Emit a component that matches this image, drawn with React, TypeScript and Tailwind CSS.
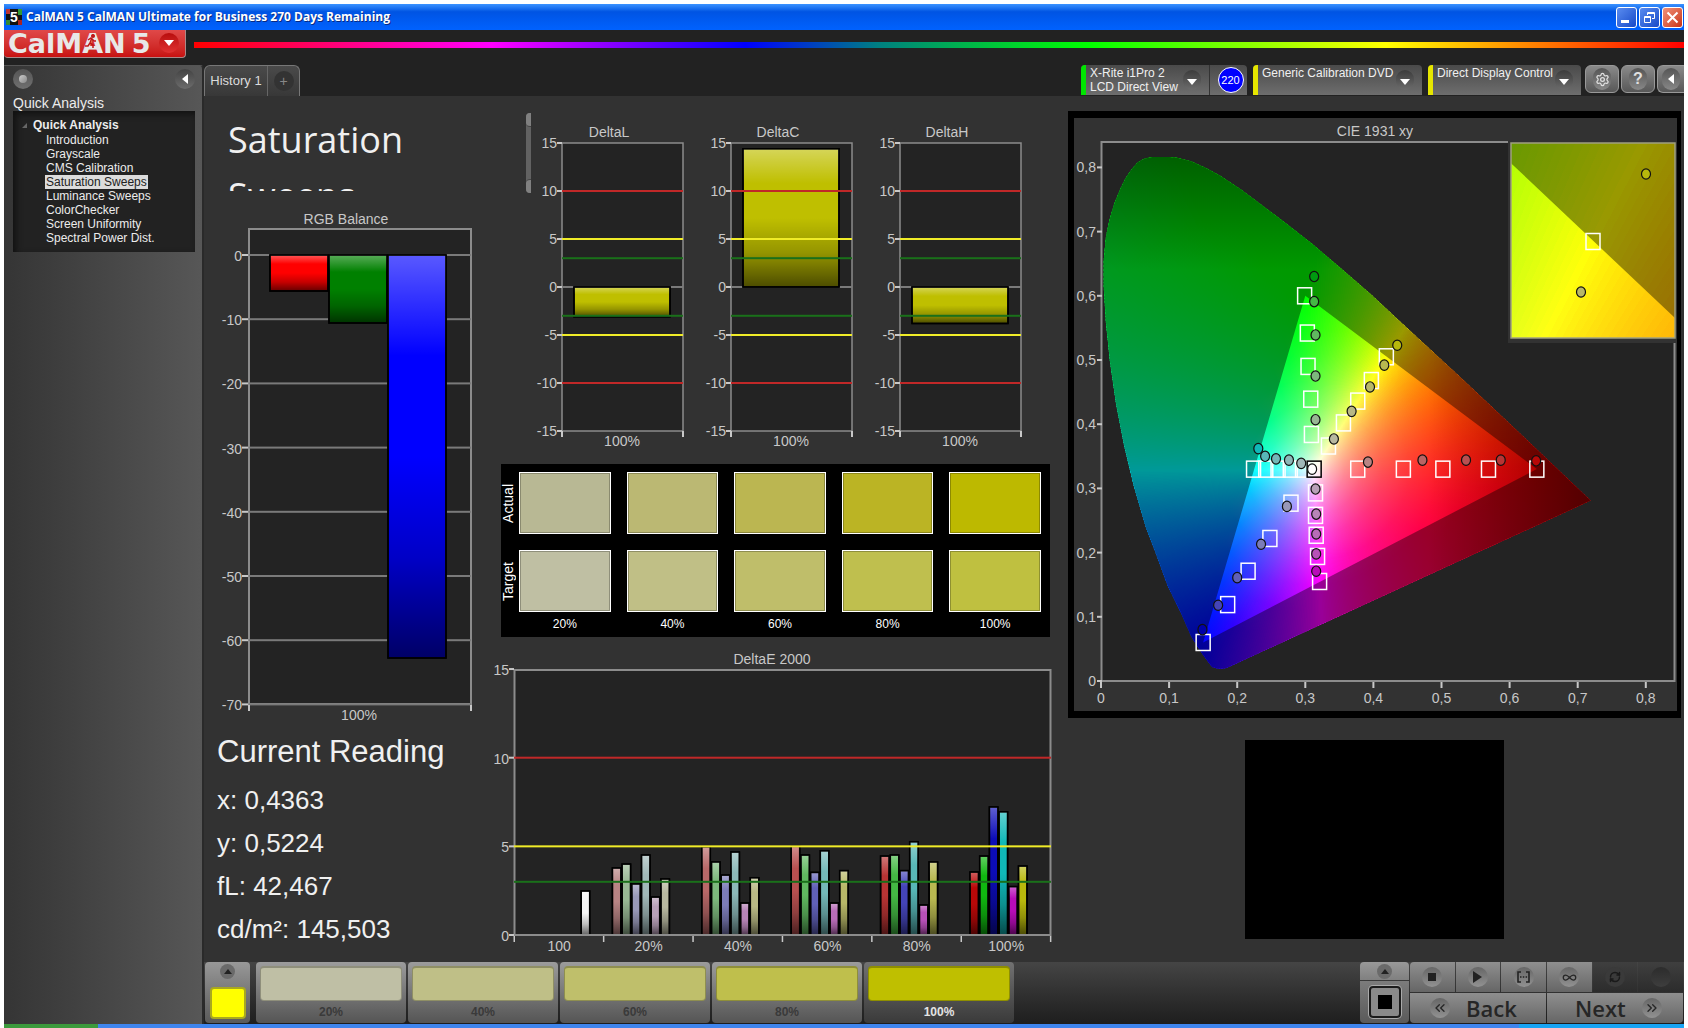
import React, { useState } from 'react';
import { ChevronsLeft, ChevronsRight, Infinity as InfinityIcon, RefreshCw, Settings } from 'lucide-react';

const PAGES = [
  'Introduction',
  'Grayscale',
  'CMS Calibration',
  'Saturation Sweeps',
  'Luminance Sweeps',
  'ColorChecker',
  'Screen Uniformity',
  'Spectral Power Dist.',
];

const SWEEP = [
  { label: '20%', actual: '#b8b894', target: '#bfbfa3' },
  { label: '40%', actual: '#bbb873', target: '#c0bf86' },
  { label: '60%', actual: '#bbb651', target: '#bfbe6a' },
  { label: '80%', actual: '#bbb424', target: '#bfbf4e' },
  { label: '100%', actual: '#bdb900', target: '#bfc040' },
];

const PATCHES = [
  { label: '20%', color: '#bfbfa5' },
  { label: '40%', color: '#bfbf87' },
  { label: '60%', color: '#bfbf6b' },
  { label: '80%', color: '#bfbf4c' },
  { label: '100%', color: '#bfbf00' },
];

const READINGS = ['x: 0,4363', 'y: 0,5224', 'fL: 42,467', 'cd/m²: 145,503'];

// series order: red, green, blue, cyan, magenta, yellow, white
const DELTA_E = [
  { label: '100', values: [0, 0, 0, 0, 0, 0, 2.48], colors: ['', '', '', '', '', '', '#f4f4f4'] },
  { label: '20%', values: [3.78, 4.0, 2.88, 4.51, 2.14, 3.16], colors: ['#b88484', '#98b894', '#9898b8', '#a0b8b8', '#b8a0b8', '#b8b8a0'] },
  { label: '40%', values: [4.98, 4.12, 3.38, 4.68, 1.8, 3.23], colors: ['#b86868', '#7cb87c', '#7c7cb8', '#8cb8b8', '#b884b8', '#b8b884'] },
  { label: '60%', values: [5.0, 4.51, 3.53, 4.75, 1.8, 3.63], colors: ['#b85050', '#60b860', '#6060b8', '#74b8b8', '#b86cb8', '#b8b868'] },
  { label: '80%', values: [4.45, 4.51, 3.63, 5.26, 1.69, 4.12], colors: ['#b83434', '#44b844', '#4444b8', '#58b8b8', '#b850b8', '#b8b850'] },
  { label: '100%', values: [3.55, 4.45, 7.22, 6.95, 2.73, 3.89], colors: ['#b80808', '#10b810', '#0c0cb8', '#10b8b8', '#b80cb8', '#b8b80c'] },
];

type Point = [number, number];

const LOCUS: Point[] = [
  [0.172, 0.019], [0.163, 0.022], [0.151, 0.039], [0.133, 0.068], [0.116, 0.109], [0.098, 0.148],
  [0.081, 0.197], [0.066, 0.239], [0.048, 0.304], [0.034, 0.366], [0.022, 0.432], [0.013, 0.498],
  [0.007, 0.56], [0.004, 0.615], [0.004, 0.655], [0.007, 0.691], [0.012, 0.717], [0.019, 0.742],
  [0.028, 0.766], [0.036, 0.783], [0.045, 0.797], [0.054, 0.808], [0.064, 0.814], [0.075, 0.816],
  [0.1, 0.816], [0.112, 0.815], [0.133, 0.809], [0.154, 0.799], [0.175, 0.787], [0.205, 0.766],
  [0.233, 0.744], [0.269, 0.715], [0.31, 0.681], [0.351, 0.644], [0.398, 0.601], [0.436, 0.563],
  [0.527, 0.474], [0.627, 0.374], [0.719, 0.281], [0.19, 0.023], [0.183, 0.02],
];

const GAMUT: Point[] = [[0.64, 0.33], [0.3, 0.6], [0.15, 0.06]];
const WHITE: Point = [0.3127, 0.329];

const TARGETS: Point[] = [
  [0.377, 0.33], [0.444, 0.33], [0.502, 0.33], [0.569, 0.33], [0.64, 0.33],
  [0.224, 0.33], [0.242, 0.33], [0.26, 0.33], [0.278, 0.33], [0.296, 0.33],
  [0.315, 0.293], [0.315, 0.258], [0.316, 0.227], [0.318, 0.194], [0.321, 0.155],
  [0.279, 0.277], [0.248, 0.222], [0.216, 0.171], [0.186, 0.119], [0.15, 0.06],
  [0.299, 0.6], [0.303, 0.542], [0.304, 0.49], [0.308, 0.439], [0.309, 0.384],
  [0.419, 0.505], [0.397, 0.468], [0.377, 0.436], [0.356, 0.402], [0.334, 0.366],
];

const MEASURED: [number, number, string][] = [
  [0.392, 0.341, '#b88484'], [0.472, 0.344, '#b86464'], [0.536, 0.344, '#b85050'], [0.587, 0.344, '#b83434'], [0.639, 0.343, '#b80808'],
  [0.294, 0.339, '#a0b8b8'], [0.276, 0.344, '#8cb8b8'], [0.257, 0.346, '#74b8b8'], [0.241, 0.35, '#58b8b8'], [0.231, 0.362, '#10b8b8'],
  [0.315, 0.299, '#b8a0b8'], [0.316, 0.26, '#b884b8'], [0.316, 0.229, '#b86cb8'], [0.316, 0.198, '#b850b8'], [0.316, 0.171, '#b80cb8'],
  [0.273, 0.272, '#9898b8'], [0.235, 0.213, '#7c7cb8'], [0.2, 0.161, '#6060b8'], [0.172, 0.118, '#4444b8'], [0.149, 0.08, '#0000a8'],
  [0.313, 0.63, '#009a10'], [0.313, 0.591, '#44b844'], [0.315, 0.539, '#60b860'], [0.315, 0.475, '#7cb87c'], [0.315, 0.407, '#98b894'],
  [0.435, 0.523, '#b8b80c'], [0.416, 0.492, '#b8b850'], [0.395, 0.458, '#b8b868'], [0.368, 0.42, '#b8b884'], [0.342, 0.377, '#b8b8a0'],
];

// plot area of the chromaticity chart
const px = (x: number) => 27 + x * 681;
const py = (y: number) => 563 - y * 642;
const toPath = (pts: Point[]) => 'M' + pts.map(([x, y]) => `${px(x).toFixed(1)} ${py(y).toFixed(1)}`).join('L') + 'Z';

function xyToRgb(x: number, y: number) {
  const yy = Math.max(y, 0.001);
  const X = x / yy;
  const Z = (1 - x - yy) / yy;
  const lin = [
    3.2406 * X - 1.5372 - 0.4986 * Z,
    -0.9689 * X + 1.8758 + 0.0415 * Z,
    0.0557 * X - 0.204 + 1.057 * Z,
  ].map((v) => Math.max(v, 0));
  const max = Math.max(...lin);
  const [r, g, b] = lin.map((v) => Math.round((255 * v) / max));
  return `rgb(${r},${g},${b})`;
}

const WEDGES = 600;
const REACH = 0.62;
const STOPS = [0, 0.01, 0.025, 0.045, 0.07, 0.1, 0.14, 0.18, 0.22, 0.27, 0.33, 0.42];

function Spectrum() {
  const [wx, wy] = WHITE;
  const step = (2 * Math.PI) / WEDGES;
  const at = (angle: number, r: number): Point => [wx + Math.cos(angle) * r, wy + Math.sin(angle) * r];
  return (
    <g shapeRendering="crispEdges">
      {Array.from({ length: WEDGES }, (_, i) => {
        const angle = i * step;
        const [ex, ey] = at(angle, REACH);
        return (
          <React.Fragment key={i}>
            <linearGradient id={`ray-${i}`} gradientUnits="userSpaceOnUse" x1={px(wx)} y1={py(wy)} x2={px(ex)} y2={py(ey)}>
              {STOPS.map((r) => {
                const [x, y] = at(angle, r);
                return <stop key={r} offset={r / REACH} stopColor={xyToRgb(x, y)} />;
              })}
            </linearGradient>
            <path d={toPath([WHITE, at(angle - step / 2, REACH), at(angle + step, REACH)])} fill={`url(#ray-${i})`} />
          </React.Fragment>
        );
      })}
    </g>
  );
}

function Square({ x, y, stroke = '#fff' }: { x: number; y: number; stroke?: string }) {
  return <rect x={x - 7} y={y - 8} width={14} height={16} fill="none" stroke={stroke} strokeWidth={1.5} />;
}

function Dot({ x, y, fill }: { x: number; y: number; fill: string }) {
  return <ellipse cx={x} cy={y} rx={4.5} ry={5.2} fill={fill} stroke="#111" strokeWidth={1.2} />;
}

function CieChart() {
  const xTicks = ['0', '0,1', '0,2', '0,3', '0,4', '0,5', '0,6', '0,7', '0,8'];
  // the inset magnifies a 0.05 x 0.05 window around the selected target
  const ix = 437;
  const iy = 25;
  const iw = 164;
  const ih = 195;
  const sx = iw / (0.05 * 681);
  const sy = ih / (0.05 * 642);
  const cx = px(0.4193);
  const cy = py(0.5053);
  const mx = ix + iw / 2;
  const my = iy + ih / 2;
  return (
    <svg viewBox="0 0 603 593" className="block w-full h-auto" role="img" aria-label="CIE 1931 xy">
      <defs>
        <clipPath id="locus-clip"><path d={toPath(LOCUS)} /></clipPath>
        <clipPath id="inset-clip"><rect x={ix} y={iy} width={iw} height={ih} /></clipPath>
        <linearGradient id="fade-red" gradientUnits="userSpaceOnUse" x1={px(0.48)} x2={px(0.72)} y1="0" y2="0">
          <stop offset="0" stopColor="#000" stopOpacity="0" />
          <stop offset="1" stopColor="#000" stopOpacity="0.46" />
        </linearGradient>
        <linearGradient id="fade-green" gradientUnits="userSpaceOnUse" x1="0" x2="0" y1={py(0.64)} y2={py(0.82)}>
          <stop offset="0" stopColor="#000" stopOpacity="0" />
          <stop offset="1" stopColor="#000" stopOpacity="0.38" />
        </linearGradient>
        <g id="diagram">
          <g clipPath="url(#locus-clip)">
            <Spectrum />
            <path d={`${toPath(LOCUS)}${toPath(GAMUT)}`} fillRule="evenodd" fill="#000" fillOpacity="0.4" />
            <rect x={px(0.48)} y="0" width="200" height="593" fill="url(#fade-red)" />
            <rect x="0" y="0" width="603" height={py(0.64)} fill="url(#fade-green)" />
          </g>
        </g>
      </defs>
      <rect x="27.5" y="24" width="573" height="539" fill="#232323" stroke="#8c8c8c" strokeWidth="2" />
      <text x="301" y="18" textAnchor="middle" fontSize="14" fill="#c8c8c8">CIE 1931 xy</text>
      {xTicks.map((t, i) => (
        <g key={t} fontSize="14" fill="#c8c8c8">
          <rect x={px(i / 10) - 1} y="564" width="2" height="6" />
          <text x={px(i / 10)} y="585" textAnchor="middle">{t}</text>
          <rect x="23" y={py(i / 10) - 1} width="5" height="2" />
          <text x="22" y={py(i / 10) + 5} textAnchor="end">{t}</text>
        </g>
      ))}
      <use href="#diagram" />
      {TARGETS.map(([x, y]) => <Square key={`${x}-${y}`} x={px(x)} y={py(y)} />)}
      {MEASURED.map(([x, y, c]) => <Dot key={`${x}-${y}`} x={px(x)} y={py(y)} fill={c} />)}
      <rect x={px(0.313) - 7} y={py(0.33) - 8} width="14" height="16" fill="#fff" fillOpacity="0.5" stroke="#000" strokeWidth="1.5" />
      <Dot x={px(0.31)} y={py(0.33)} fill="#fff" />

      <rect x="434" y="20" width="169" height="205" fill="#323232" />
      <g clipPath="url(#inset-clip)">
        <use href="#diagram" transform={`translate(${mx} ${my}) scale(${sx} ${sy}) translate(${-cx} ${-cy})`} />
        <Square x={mx} y={my + 1} />
        <Dot x={572} y={56} fill="#b8b80c" />
        <Dot x={507} y={174} fill="#b8b868" />
      </g>
      <rect x={ix} y={iy} width={iw} height={ih} fill="none" stroke="#a0a080" strokeWidth="1.5" />
    </svg>
  );
}

interface BarProps {
  x: number;
  y: number;
  width: number;
  height: number;
  fill: string;
}

function Bar({ x, y, width, height, fill }: BarProps) {
  return (
    <g stroke="#000" strokeWidth="1.5">
      <rect x={x} y={y} width={width} height={height} fill={fill} />
      <rect x={x} y={y} width={width} height={height} fill="url(#gloss)" />
    </g>
  );
}

function RgbBalance() {
  const y = (v: number) => 55 - v * 6.42;
  return (
    <svg viewBox="0 0 290 525" className="block w-full h-auto" role="img" aria-label="RGB Balance">
      <text x="142" y="24" textAnchor="middle" fontSize="14" fill="#c8c8c8">RGB Balance</text>
      <rect x="45" y="29" width="222" height="475" fill="#232323" stroke="#8c8c8c" strokeWidth="2" />
      {[0, -10, -20, -30, -40, -50, -60, -70].map((v) => (
        <g key={v} fill="#c8c8c8" fontSize="14">
          <rect x="45" y={y(v) - 1} width="222" height="2" fill="#7a7a7a" />
          <rect x="38" y={y(v) - 1} width="6" height="2" />
          <text x="38" y={y(v) + 6} textAnchor="end">{v}</text>
        </g>
      ))}
      <Bar x={66} y={55} width={58} height={36} fill="#ff0000" />
      <Bar x={125} y={55} width={58} height={68} fill="#008000" />
      <Bar x={184} y={55} width={58} height={403} fill="#0000ff" />
      <path d="M45 505v6M267 505v6" stroke="#c8c8c8" strokeWidth="2" />
      <text x="155" y="520" textAnchor="middle" fontSize="14" fill="#c8c8c8">100%</text>
    </svg>
  );
}

function Limits({ x, width, levels, y }: { x: number; width: number; levels: number[]; y: (v: number) => number }) {
  const color = (v: number) => (Math.abs(v) === 10 ? '#c02828' : Math.abs(v) === 5 ? '#f0ec28' : '#1a701a');
  return (
    <>
      {levels.map((v) => (
        <rect key={v} x={x} y={y(v) - 1} width={width} height="2" fill={color(v)} />
      ))}
    </>
  );
}

function DeltaChart({ title, value }: { title: string; value: number }) {
  const y = (v: number) => 191 - v * 9.6;
  return (
    <svg viewBox="0 0 169 360" className="block w-full h-auto" role="img" aria-label={title}>
      <text x="78" y="41" textAnchor="middle" fontSize="14" fill="#c8c8c8">{title}</text>
      <rect x="31" y="47" width="121" height="288" fill="#232323" stroke="#8c8c8c" strokeWidth="1.5" />
      <rect x="31" y="190" width="121" height="2" fill="#7a7a7a" />
      {[15, 10, 5, 0, -5, -10, -15].map((v) => (
        <g key={v} fill="#c8c8c8" fontSize="14">
          <rect x="26" y={y(v) - 1} width="5" height="2" />
          <text x="26" y={y(v) + 5} textAnchor="end">{v}</text>
        </g>
      ))}
      <Bar x={43} y={y(Math.max(value, 0))} width={96} height={Math.abs(value) * 9.6} fill="#bfbf00" />
      <Limits x={31} width={121} levels={[10, 5, 3, -3, -5, -10]} y={y} />
      <path d="M31 335v6M152 335v6" stroke="#c8c8c8" strokeWidth="2" />
      <text x="91" y="350" textAnchor="middle" fontSize="14" fill="#c8c8c8">100%</text>
    </svg>
  );
}

function DeltaEChart() {
  const y = (v: number) => 298 - v * 17.73;
  const group = 89.4;
  return (
    <svg viewBox="0 0 556 322" className="block w-full h-auto overflow-visible" role="img" aria-label="DeltaE 2000">
      <text x="278" y="27" textAnchor="middle" fontSize="14" fill="#c8c8c8">DeltaE 2000</text>
      <rect x="20.5" y="33" width="536" height="265" fill="#232323" stroke="#8c8c8c" strokeWidth="2" />
      {[15, 10, 5, 0].map((v) => (
        <g key={v} fill="#c8c8c8" fontSize="14">
          <rect x="15" y={y(v) - 1} width="5" height="2" />
          <text x="15" y={y(v) + 6} textAnchor="end">{v}</text>
        </g>
      ))}
      {DELTA_E.map((g, gi) => (
        <g key={g.label}>
          {g.values.map((v, i) =>
            v > 0 ? (
              <Bar key={i} x={20.5 + gi * group + 8.5 + i * 9.7} y={y(v)} width={8.5} height={v * 17.73} fill={g.colors[i]} />
            ) : null
          )}
          <text x={20.5 + gi * group + 44.7} y="314" textAnchor="middle" fontSize="14" fill="#c8c8c8">{g.label}</text>
        </g>
      ))}
      <rect x="20" y="297" width="537" height="2" fill="#8c8c8c" />
      {[0, 1, 2, 3, 4, 5, 6].map((i) => (
        <rect key={i} x={19.5 + i * group} y="299" width="1.5" height="6" fill="#c8c8c8" />
      ))}
      <Limits x={20} width={537} levels={[10, 5, 3]} y={y} />
    </svg>
  );
}

function Comparator() {
  return (
    <section className="mt-2 ml-[7px] bg-black pt-2 pb-1 pr-[9px] text-white">
      {(['actual', 'target'] as const).map((kind) => (
        <div key={kind} className={`flex items-center ${kind === 'target' ? 'mt-4' : ''}`}>
          <div className="flex w-[18px] shrink-0 items-center justify-center pr-1">
            <span className="rotate-180 text-sm leading-[14px] capitalize [writing-mode:vertical-rl]">{kind}</span>
          </div>
          <div className="grid flex-1 grid-cols-5 gap-4">
            {SWEEP.map((s) => (
              <div key={s.label} className="h-[62px] border border-white">
                <div className="h-full border border-black/25" style={{ background: s[kind] }} />
              </div>
            ))}
          </div>
        </div>
      ))}
      <div className="ml-[18px] mt-[3px] grid grid-cols-5 gap-4 text-center text-[12px] leading-[18px]">
        {SWEEP.map((s) => <span key={s.label}>{s.label}</span>)}
      </div>
    </section>
  );
}

function DownArrow() {
  return (
    <span className="flex h-5 w-[18px] shrink-0 items-center justify-center rounded-full bg-gradient-to-b from-[#3c3c3c] to-[#6c6c6c]">
      <svg width="10" height="6" viewBox="0 0 10 6" className="mt-1"><path d="M0 0h10L5 6z" fill="#fff" /></svg>
    </span>
  );
}

function Device({ lines, color, width, badge }: { lines: string[]; color: string; width: string; badge?: string }) {
  return (
    <div className={`flex h-[30px] items-stretch overflow-hidden rounded-t bg-gradient-to-b from-[#4a4a4a] to-[#6e6e6e] ${width}`}>
      <div className={`w-[5px] shrink-0 ${color}`} />
      <button className="flex flex-1 items-center justify-between pl-1 pr-2 text-left">
        <span className="self-start pt-px text-[12px] leading-[14px] whitespace-nowrap text-[#f0f0f0]">
          {lines.map((l) => <span key={l} className="block">{l}</span>)}
        </span>
        <DownArrow />
      </button>
      {badge && (
        <div className="flex w-[38px] items-center justify-center border-l border-[#333] pl-1">
          <span className="flex h-[26px] w-[26px] items-center justify-center rounded-full border border-white bg-[#0000ff] text-[11px] text-white">{badge}</span>
        </div>
      )}
    </div>
  );
}

function TitleBar() {
  return (
    <header className="flex h-[26px] items-center bg-gradient-to-b from-[#3a92ff] via-[#0054e3] via-30% to-[#0062ff] pl-0.5 pr-px">
      <svg width="16" height="16" viewBox="0 0 16 16" aria-hidden="true">
        <rect width="16" height="16" fill="#111" />
        <path d="M0 0h4v5H0z" fill="#b33" /><path d="M12 0h4v6h-4z" fill="#393" /><path d="M0 11h4v5H0z" fill="#383" /><path d="M12 11h4v5h-4z" fill="#a22" />
        <text x="8" y="13" textAnchor="middle" fontSize="14" fontWeight="bold" fill="#fff">5</text>
      </svg>
      <h1 className="ml-1 flex-1 font-['Open_Sans',sans-serif] text-[12px] font-bold leading-4 text-white [text-shadow:1px_1px_#0a2a80]">
        CalMAN 5 CalMAN Ultimate for Business 270 Days Remaining
      </h1>
      <div className="flex gap-0.5">
        <button aria-label="Minimize" className="flex h-[21px] w-[21px] items-end justify-start rounded-[3px] border border-white bg-gradient-to-br from-[#5a8cf0] to-[#1848c8] p-1">
          <span className="block h-[3px] w-2 bg-white" />
        </button>
        <button aria-label="Restore" className="flex h-[21px] w-[21px] items-center justify-center rounded-[3px] border border-white bg-gradient-to-br from-[#5a8cf0] to-[#1848c8]">
          <svg width="13" height="13" viewBox="0 0 13 13" fill="none" stroke="#fff"><path d="M4.500 4V1.500h7v6H9M4.500 2.500h7" /><path d="M1.500 5.500h6v6h-6zM1.500 6.500h6" /></svg>
        </button>
        <button aria-label="Close" className="flex h-[21px] w-[21px] items-center justify-center rounded-[3px] border border-white bg-gradient-to-br from-[#f09078] to-[#c83010]">
          <svg width="13" height="13" viewBox="0 0 13 13" stroke="#fff" strokeWidth="2"><path d="M1.500 1.500l10 10M11.500 1.500l-10 10" /></svg>
        </button>
      </div>
    </header>
  );
}

function Logo() {
  return (
    <button className="relative flex h-7 w-[182px] shrink-0 items-center rounded-b border-b border-r border-[#a88] bg-gradient-to-b from-[#e04848] to-[#c81010] pl-1 font-['DejaVu_Sans',sans-serif] text-[27px] font-bold leading-7 text-[#e8e8e8]">
      <span>CalMAN</span>
      <span className="ml-1.5">5</span>
      <svg width="13" height="15" viewBox="0 0 13 15" className="absolute left-[81px] top-1" fill="none" stroke="#c01818" strokeWidth="1.5" aria-hidden="true">
        <circle cx="8" cy="2" r="1.3" fill="#c01818" />
        <path d="M3 6l3-2 3 3h2M6.500 5L5 9l3 2 0 3M5 9l-2 3H0" />
      </svg>
      <span className="absolute right-1.5 top-[3px] flex h-5 w-5 items-center justify-center rounded-full bg-gradient-to-b from-[#b80c0c] to-[#e03030]">
        <svg width="10" height="6" viewBox="0 0 10 6"><path d="M0 0h10L5 6z" fill="#fff" /></svg>
      </span>
    </button>
  );
}

function Sidebar({ page, onSelect }: { page: string; onSelect: (p: string) => void }) {
  return (
    <aside className="w-[200px] shrink-0 rounded-tr border-r-2 border-t border-[#2a2a2a] border-t-[#555] bg-gradient-to-r from-[#353535] to-[#575757] pl-[9px] pr-[7px]">
      <div className="flex justify-between pt-[3px]">
        <button aria-label="Options" className="flex h-5 w-5 items-center justify-center rounded-full bg-gradient-to-b from-[#555] to-[#707070]">
          <span className="h-2 w-2 rounded-full bg-gradient-to-br from-[#ccc] to-[#888]" />
        </button>
        <button aria-label="Collapse" className="flex h-5 w-5 items-center justify-center rounded-full bg-gradient-to-b from-[#444] to-[#6c6c6c]">
          <svg width="6" height="10" viewBox="0 0 6 10"><path d="M6 0v10L0 5z" fill="#fff" /></svg>
        </button>
      </div>
      <h2 className="mt-1.5 text-sm leading-4 text-[#ececec]">Quick Analysis</h2>
      <nav className="h-[141px] bg-[#222] pt-[7px] text-[12px] text-[#ececec] shadow-[inset_3px_3px_6px_#111]">
        <div className="flex items-center font-bold leading-[15px]">
          <svg width="5" height="5" viewBox="0 0 5 5" className="ml-[9px] mr-1.5"><path d="M5 0v5H0z" fill="#666" /></svg>
          Quick Analysis
        </div>
        <ul className="pl-8">
          {PAGES.map((p) => (
            <li key={p} className="flex h-[14px]">
              <button
                onClick={() => onSelect(p)}
                className={`px-px leading-[14px] ${p === page ? 'bg-[#dcdcdc] text-[#222]' : ''}`}
              >
                {p}
              </button>
            </li>
          ))}
        </ul>
      </nav>
    </aside>
  );
}

function Transport() {
  const cell = 'flex h-[30px] items-center bg-gradient-to-b from-[#8f8f8f] to-[#666]';
  const knob = 'flex h-5 w-5 items-center justify-center rounded-full bg-gradient-to-b from-[#666] to-[#929292] text-[#262626]';
  return (
    <div className="flex shrink-0">
      <div className="flex w-[49px] flex-col gap-px">
        <button aria-label="Expand" className="flex h-[18px] items-center justify-center rounded-t bg-gradient-to-b from-[#999] to-[#808080]">
          <span className="flex h-[15px] w-[15px] items-center justify-center rounded-full bg-[#6a6a6a]">
            <svg width="8" height="5" viewBox="0 0 8 5"><path d="M4 0l4 5H0z" fill="#222" /></svg>
          </span>
        </button>
        <button aria-label="Pattern window" className="flex flex-1 items-center justify-center rounded-b bg-gradient-to-b from-[#7c7c7c] to-[#5a5a5a]">
          <span className="flex h-8 w-8 items-center justify-center rounded border-2 border-[#1c1c1c] bg-[#8a8a8a] ring-1 ring-[#aaa]">
            <span className="h-3.5 w-3.5 bg-black" />
          </span>
        </button>
      </div>
      <div className="ml-px grid w-[273px] grid-cols-6 gap-px">
        <button aria-label="Stop" className={`${cell} justify-center rounded-tl`}>
          <span className={knob}><span className="h-2 w-2 bg-[#222]" /></span>
        </button>
        <button aria-label="Play" className={`${cell} justify-center`}>
          <span className={knob}><svg width="9" height="12" viewBox="0 0 9 12"><path d="M0 0l9 6-9 6z" fill="#222" /></svg></span>
        </button>
        <button aria-label="Read series" className={`${cell} justify-center`}>
          <span className={knob}>
            <svg width="13" height="12" viewBox="0 0 13 12" fill="none" stroke="#222" strokeWidth="1.6"><path d="M4 1H1v10h3M9 1h3v10H9" /><path d="M3 6h1.500M5.800 6h1.500M8.600 6h1.500" /></svg>
          </span>
        </button>
        <button aria-label="Read continuously" className={`${cell} justify-center`}>
          <span className={knob}><InfinityIcon size={15} /></span>
        </button>
        <button aria-label="Refresh" disabled className="flex h-[30px] items-center justify-center bg-gradient-to-b from-[#3f3f3f] to-[#2c2c2c]">
          <span className="flex h-5 w-5 items-center justify-center rounded-full bg-[#3a3a3a] text-[#1a1a1a]"><RefreshCw size={12} strokeWidth={3} /></span>
        </button>
        <button aria-label="Record" disabled className="flex h-[30px] items-center justify-center bg-gradient-to-b from-[#3f3f3f] to-[#2c2c2c]">
          <span className="h-5 w-5 rounded-full bg-gradient-to-b from-[#2c2c2c] to-[#3e3e3e]" />
        </button>
        <button className={`${cell} col-span-3 gap-4 rounded-bl pl-5 font-['Open_Sans',sans-serif] text-[22px] font-semibold text-[#262626]`}>
          <span className={knob}><ChevronsLeft size={16} /></span>Back
        </button>
        <button className={`${cell} col-span-3 gap-4 rounded-br pl-7 font-['Open_Sans',sans-serif] text-[22px] font-semibold text-[#262626]`}>
          Next<span className={knob}><ChevronsRight size={16} /></span>
        </button>
      </div>
    </div>
  );
}

function BottomBar() {
  const [selected, setSelected] = useState('100%');
  return (
    <footer className="flex h-[62px] items-stretch bg-gradient-to-b from-[#454545] to-[#1e1e1e] px-px pb-px">
      <button aria-label="Current patch" className="mr-1.5 flex w-[45px] shrink-0 flex-col items-center rounded bg-gradient-to-b from-[#989898] to-[#5a5a5a] pt-0.5">
        <span className="flex h-[15px] w-[15px] items-center justify-center rounded-full bg-[#6a6a6a]">
          <svg width="8" height="5" viewBox="0 0 8 5"><path d="M4 0l4 5H0z" fill="#222" /></svg>
        </span>
        <span className="mt-2 h-8 w-9 rounded border-2 border-[#a8a820] bg-[#ffff00]" />
      </button>
      <div className="flex min-w-0 flex-1 gap-0.5">
        {PATCHES.map((p) => (
          <button
            key={p.label}
            onClick={() => setSelected(p.label)}
            className={`flex w-[150px] flex-col rounded px-1 pt-1 text-[12px] font-bold ${
              p.label === selected
                ? 'bg-gradient-to-b from-[#727272] to-[#3a3a3a] text-[#e4e4e4]'
                : 'bg-gradient-to-b from-[#9c9c9c] to-[#555] text-[#3a3a3a]'
            }`}
          >
            <span className="h-[38px] w-full rounded border border-t-2 border-black/25" style={{ background: p.color }} />
            <span className="w-full text-center leading-[22px]">{p.label}</span>
          </button>
        ))}
      </div>
      <Transport />
    </footer>
  );
}

export default function App() {
  const [page, setPage] = useState('Saturation Sweeps');
  const tool = 'flex h-7 items-center justify-center border border-[#999] bg-gradient-to-b from-[#8a8a8a] to-[#585858]';
  const toolKnob = 'flex h-[22px] w-[18px] items-center justify-center rounded-full bg-gradient-to-b from-[#555] to-[#888] text-[#e0e0e0]';

  return (
    <div className="flex min-h-screen flex-col bg-white px-1 pt-1 font-['Liberation_Sans',Arial,sans-serif]">
      <svg width="0" height="0" className="absolute" aria-hidden="true">
        <defs>
          <linearGradient id="gloss" x1="0" x2="0" y1="0" y2="1">
            <stop offset="0" stopColor="#fff" stopOpacity="0.35" />
            <stop offset="0.25" stopColor="#fff" stopOpacity="0" />
            <stop offset="0.5" stopColor="#000" stopOpacity="0" />
            <stop offset="0.75" stopColor="#000" stopOpacity="0.22" />
            <stop offset="1" stopColor="#000" stopOpacity="0.6" />
          </linearGradient>
        </defs>
      </svg>

      <TitleBar />

      <div className="flex flex-1 flex-col bg-[#222]">
        <div className="flex h-[35px] items-start">
          <Logo />
          <div className="ml-2 mt-3 h-1.5 flex-1 bg-[linear-gradient(to_right,#ff0000,#ff00ff_20%,#0000ff_37%,#008080_46%,#00ff00_60%,#ffff00_80%,#ff0000)]" />
        </div>

        <div className="flex flex-1">
          <Sidebar page={page} onSelect={setPage} />

          <main className="flex min-w-0 flex-1 flex-col">
            {/* tabs and devices */}
            <div className="flex h-[31px] items-start">
              <div className="flex h-[31px] rounded-t-md border border-b-0 border-[#777] bg-gradient-to-b from-[#4a4a4a] to-[#383838]">
                <button className="w-[62px] text-[13px] text-[#dcdcdc]">History 1</button>
                <button aria-label="Add history" className="flex w-8 items-center justify-center border-l border-[#666]">
                  <span className="flex h-5 w-5 items-center justify-center rounded-full bg-[#333] text-sm leading-none text-[#888]">+</span>
                </button>
              </div>
              <div className="flex flex-1 justify-end gap-1.5">
                <Device lines={['X-Rite i1Pro 2', 'LCD Direct View']} color="bg-[#00e600]" width="w-[166px]" badge="220" />
                <Device lines={['Generic Calibration DVD']} color="bg-[#e6e600]" width="w-[169px]" />
                <Device lines={['Direct Display Control']} color="bg-[#e6e600]" width="w-[153px]" />
              </div>
              <div className="ml-1 flex gap-0.5">
                <button aria-label="Settings" className={`${tool} w-[34px] rounded-md`}><span className={toolKnob}><Settings size={15} /></span></button>
                <button aria-label="Help" className={`${tool} w-[34px] rounded-md`}><span className={`${toolKnob} text-base font-bold`}>?</span></button>
                <button aria-label="Hide" className={`${tool} w-[27px] rounded-l-md border-r-0`}>
                  <span className={toolKnob}><svg width="6" height="10" viewBox="0 0 6 10"><path d="M6 0v10L0 5z" fill="#fff" /></svg></span>
                </button>
              </div>
            </div>

            <div className="grid flex-1 grid-cols-[290fr_556fr_634fr] items-start bg-[#323232]">
              <div>
                <div className="mb-[9px] h-[95px] overflow-hidden pl-6 pr-12 pt-4">
                  <h2 className="font-['Open_Sans',sans-serif] text-[36px] leading-[56px] text-[#f0f0f0]">Saturation Sweeps</h2>
                </div>
                <RgbBalance />
                <div className="pl-[13px] text-[#f0f0f0]">
                  <h3 className="text-[31px] leading-[54px]">Current Reading</h3>
                  {READINGS.map((r) => <p key={r} className="text-[26px] leading-[43px]">{r}</p>)}
                </div>
              </div>

              <div>
                <div className="flex items-start pl-8 pr-3">
                  <div className="mt-[17px] flex h-20 w-[5px] shrink-0 flex-col justify-between rounded-l bg-[#626262]">
                    <span className="h-3.5 rounded-l border-b border-[#444] bg-[#808080]" />
                    <span className="h-3.5 rounded-l border-t border-[#444] bg-[#808080]" />
                  </div>
                  <div className="grid flex-1 grid-cols-3">
                    <DeltaChart title="DeltaL" value={-3.1} />
                    <DeltaChart title="DeltaC" value={14.4} />
                    <DeltaChart title="DeltaH" value={-3.8} />
                  </div>
                </div>
                <Comparator />
                <DeltaEChart />
              </div>

              <div className="pl-[18px] pr-[3px] pt-[15px]">
                <div className="border-y-[7px] border-l-[6px] border-r-4 border-black bg-[#323232]">
                  <CieChart />
                </div>
                <div className="mx-auto mt-[22px] h-[199px] w-[259px] bg-black" />
              </div>
            </div>

            <BottomBar />
          </main>
        </div>
      </div>

      <div className="flex h-1 bg-[#3f85ee]">
        <div className="w-[94px] bg-[#3c9a3c]" />
        <div className="ml-auto w-[165px] bg-[#18a4f4]" />
      </div>
    </div>
  );
}
